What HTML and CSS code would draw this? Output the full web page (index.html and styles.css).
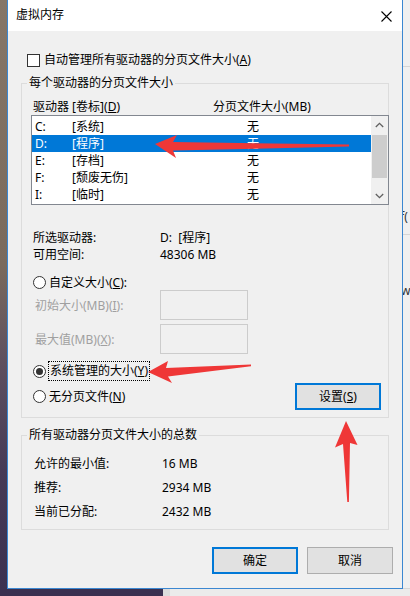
FILE: index.html
```html
<!DOCTYPE html>
<html lang="zh-CN">
<head>
<meta charset="utf-8">
<title>虚拟内存</title>
<link rel="stylesheet" href="styles.css">
</head>
<body>
<div class="screen">
  <div class="desk-left"></div>
  <div class="dialog">
    <div class="titlebar">
      <span class="title">虚拟内存</span>
      <svg class="close" width="11" height="11" viewBox="0 0 11 11"><path d="M0.5 0.5L10.5 10.5M10.5 0.5L0.5 10.5" stroke="#000" stroke-width="1.1" fill="none"/></svg>
    </div>
    <div class="check-row">
      <span class="checkbox"></span>
      <span class="lbl">自动管理所有驱动器的分页文件大小(<u>A</u>)</span>
    </div>
    <fieldset class="group g1">
      <legend>每个驱动器的分页文件大小</legend>
      <div class="list-head">
        <span class="lh1">驱动器 [卷标](<u>D</u>)</span>
        <span>分页文件大小(MB)</span>
      </div>
      <div class="listbox">
        <div class="rows">
          <div class="row"><span class="c1">C:</span><span class="c2">[系统]</span><span>无</span></div>
          <div class="row sel"><span class="c1">D:</span><span class="c2">[程序]</span><span>无</span></div>
          <div class="row"><span class="c1">E:</span><span class="c2">[存档]</span><span>无</span></div>
          <div class="row"><span class="c1">F:</span><span class="c2">[颓废无伤]</span><span>无</span></div>
          <div class="row"><span class="c1">I:</span><span class="c2">[临时]</span><span>无</span></div>
        </div>
        <div class="scrollbar">
          <div class="sb-btn"><svg width="9" height="6" viewBox="0 0 9 6"><path d="M0.8 5L4.5 1.3L8.2 5" stroke="#606060" stroke-width="1.3" fill="none"/></svg></div>
          <div class="sb-thumb"></div>
          <div class="sb-space"></div>
          <div class="sb-btn"><svg width="9" height="6" viewBox="0 0 9 6"><path d="M0.8 1L4.5 4.7L8.2 1" stroke="#606060" stroke-width="1.3" fill="none"/></svg></div>
        </div>
      </div>
      <div class="info first"><span class="k">所选驱动器:</span><span>D:&nbsp;&nbsp;[程序]</span></div>
      <div class="info"><span class="k">可用空间:</span><span>48306 MB</span></div>
      <div class="radio-row custom"><span class="radio"></span><span class="rl">自定义大小(<u>C</u>):</span></div>
      <div class="field-row"><span class="fk">初始大小(MB)(<u>I</u>):</span><span class="tbox"></span></div>
      <div class="field-row second"><span class="fk">最大值(MB)(<u>X</u>):</span><span class="tbox"></span></div>
      <div class="radio-row system"><span class="radio on"></span><span class="rl focus">系统管理的大小(<u>Y</u>)</span></div>
      <div class="radio-row none">
        <div class="rgroup"><span class="radio"></span><span class="rl">无分页文件(<u>N</u>)</span></div>
        <button class="btn default set">设置(<u>S</u>)</button>
      </div>
    </fieldset>
    <fieldset class="group g2">
      <legend>所有驱动器分页文件大小的总数</legend>
      <div class="total first"><span class="tk">允许的最小值:</span><span>16 MB</span></div>
      <div class="total"><span class="tk">推荐:</span><span>2934 MB</span></div>
      <div class="total"><span class="tk">当前已分配:</span><span>2432 MB</span></div>
    </fieldset>
    <div class="actions">
      <button class="btn default">确定</button>
      <button class="btn">取消</button>
    </div>
  </div>
  <div class="desk-right">
    <div class="dr-line l1"></div>
    <span class="dr-text t1">f(</span>
    <div class="dr-line l2"></div>
    <span class="dr-text t2">w</span>
    <div class="dr-line l3"></div>
  </div>
</div>
<div class="desk-bottom">
  <div class="db-purple"></div>
  <div class="db-gray"></div>
</div>
<svg class="arrows" width="410" height="596" viewBox="0 0 410 596">
  <polygon fill="#ef3737" points="155,144 177,135 173,142 349,144.6 349,146.6 173,150.5 176,158"/>
  <polygon fill="#ef3737" points="148,372 168,361 166,368 251,364.4 251,366.2 168,376.5 172,383"/>
  <polygon fill="#ef3737" points="346,421 357.5,445 350,443 348.9,502 347.3,502 343,444 335,447.5"/>
</svg>
</body>
</html>
```
FILE: styles.css
```css
* { box-sizing: border-box; }
html, body {
  margin: 0;
  padding: 0;
}
body {
  width: 410px;
  height: 596px;
  overflow: hidden;
  position: relative;
  font-family: "Noto Sans", "Noto Sans CJK SC", sans-serif;
  font-size: 12px;
  color: #000;
  background: #3d3350;
}
u { text-decoration: underline; text-underline-offset: 1px; }

.screen {
  display: flex;
  height: 589px;
}
.desk-left {
  width: 7px;
  background: linear-gradient(#857668 0%, #7a6a5c 45%, #5d4f5f 62%, #463a56 80%, #3b3150 100%);
}
.desk-right {
  width: 7px;
  background: #f0f0f0;
  display: flex;
  flex-direction: column;
  overflow: hidden;
}
.dr-line { height: 1px; background: #d6d6d6; }
.dr-line.l1 { margin-top: 66px; }
.dr-text { font-size: 12px; line-height: 14px; margin-left: -3px; color: #333; }
.dr-text.t1 { margin-top: 143px; }
.dr-line.l2 { margin-top: 10px; }
.dr-text.t2 { margin-top: 50px; margin-left: -2px; }
.dr-line.l3 { margin-top: 290px; }

.dialog {
  width: 396px;
  height: 589px;
  background: #f0f0f0;
  border: 1px solid #3b87d1;
  border-top: 0;
  display: flex;
  flex-direction: column;
}
.titlebar {
  height: 31px;
  background: #fff;
  display: flex;
  align-items: center;
  justify-content: space-between;
  padding: 0 10px 0 8px;
  flex-shrink: 0;
}
.title { line-height: 16px; margin-top: -1px; }
.close { margin-top: 2px; }

.check-row {
  margin: 21px 13px 0 13px;
  height: 16px;
  display: flex;
  align-items: center;
  padding-left: 6px;
  line-height: 16px;
}
.checkbox {
  width: 13px;
  height: 13px;
  border: 1px solid #333;
  background: #fff;
  flex-shrink: 0;
}
.check-row .lbl { margin-left: 4px; }

.group {
  margin: 0 13px;
  padding: 0;
  border: 1px solid #dcdcdc;
  min-width: 0;
}
.group legend {
  margin-left: 5px;
  padding: 0 2px;
  line-height: 16px;
  height: 16px;
}
.g1 { margin-top: 7px; padding-bottom: 7px; }
.g2 { margin-top: 9px; padding-bottom: 5px; }

.list-head {
  margin-top: 8px;
  height: 16px;
  line-height: 16px;
  display: flex;
}
.lh1 { width: 191px; padding-left: 11px; }

.listbox {
  margin: 0 -1px 0 9px;
  height: 90px;
  border: 1px solid #828790;
  background: #fff;
  display: flex;
}
.rows {
  flex: 1;
  padding-top: 2px;
}
.row {
  height: 17px;
  line-height: 17px;
  display: flex;
  padding-left: 3px;
}
.row .c1 { width: 37px; }
.row .c2 { width: 175px; }
.row.sel { background: #0078d7; color: #fff; }
.scrollbar {
  width: 17px;
  background: #f0f0f0;
  display: flex;
  flex-direction: column;
}
.sb-btn {
  height: 17px;
  display: flex;
  align-items: center;
  justify-content: center;
}
.sb-thumb {
  margin: 2px 1px 0 1px;
  height: 43px;
  background: #cdcdcd;
}
.sb-space { flex: 1; }

.info {
  height: 17px;
  line-height: 17px;
  display: flex;
}
.info.first { margin-top: 24px; }
.info .k { width: 138px; padding-left: 11px; }

.radio-row {
  display: flex;
  align-items: center;
  padding-left: 11px;
  line-height: 16px;
}
.radio {
  width: 13px;
  height: 13px;
  border: 1px solid #333;
  border-radius: 50%;
  background: #fff;
  flex-shrink: 0;
  display: flex;
  align-items: center;
  justify-content: center;
}
.radio.on::after {
  content: "";
  width: 7px;
  height: 7px;
  border-radius: 50%;
  background: #333;
}
.rl { margin-left: 3px; }
.radio-row.custom { margin-top: 12px; height: 15px; }
.radio-row.system { margin-top: 7px; height: 20px; }
.rl.focus {
  margin-left: 2px;
  height: 20px;
  line-height: 18px;
  border: 1px dotted #000;
  padding: 0 1px;
}
.radio-row.none {
  margin-top: 2px;
  height: 27px;
  justify-content: space-between;
  padding-right: 7px;
}
.rgroup { display: flex; align-items: center; }

.field-row {
  display: flex;
  align-items: center;
  height: 30px;
  color: #a0a0a0;
}
.field-row.second { margin-top: 4px; }
.fk { width: 138px; padding-left: 13px; }
.tbox {
  width: 88px;
  height: 30px;
  border: 1px solid #cccccc;
  background: #f0f0f0;
}

.btn {
  font-family: inherit;
  font-size: 12px;
  color: #000;
  width: 86px;
  height: 27px;
  background: #e1e1e1;
  border: 1px solid #adadad;
  padding: 0;
  margin: 0;
  line-height: 16px;
}
.btn.default { border: 2px solid #0078d7; }

.total {
  height: 24px;
  line-height: 24px;
  display: flex;
}
.total.first { margin-top: 9px; }
.tk { width: 140px; padding-left: 12px; }

.actions {
  margin-top: 17px;
  display: flex;
  justify-content: flex-end;
  gap: 9px;
  padding-right: 9px;
}

.desk-bottom {
  display: flex;
  height: 7px;
}
.db-purple { width: 163px; background: #3a3050; }
.db-gray { flex: 1; background: #ebebeb; border-left: 7px solid #dcdcdc; }

.arrows {
  position: absolute;
  left: 0;
  top: 0;
  pointer-events: none;
}
```
